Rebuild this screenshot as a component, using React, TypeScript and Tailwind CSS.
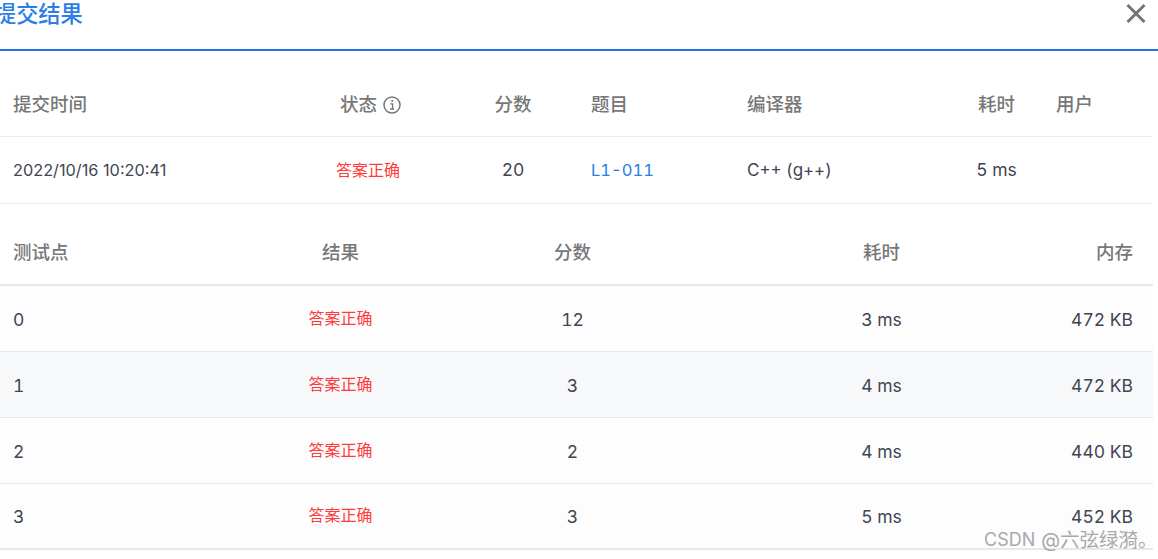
import React from "react";

const FONT = "font-['Inter','Noto_Sans_CJK_SC',sans-serif]";

function Ok() {
  return <span className="text-[16px] text-[#ff3b3b]">答案正确</span>;
}

const summaryCols = "grid grid-cols-[288px_160px_130px_156px_216px_93px_110px] items-center";
const caseCols = "grid grid-cols-[232px_217px_247px_371px_86px] items-center";

const cases = [
  ["0", "12", "3 ms", "472 KB", "bg-[#fdfdfd]", "border-b"],
  ["1", "3", "4 ms", "472 KB", "bg-[#f7f8fa]", "border-b"],
  ["2", "2", "4 ms", "440 KB", "bg-[#fdfdfd]", "border-b"],
  ["3", "3", "5 ms", "452 KB", "bg-[#fdfdfd]", "border-b-2"],
];

export default function App() {
  return (
    <div className={`${FONT} relative h-[559px] w-[1158px] overflow-hidden bg-white text-[#3f4652] tabular-nums`}>
      <header className="flex h-[51px] items-start justify-between border-b-2 border-[#2176e6]">
        <h1 className="-ml-[6px] mt-[1px] text-[22.2px] leading-[26px] font-medium text-[#2b7de9]">提交结果</h1>
        <svg className="mr-[12px] mt-[3px]" width="20" height="20" viewBox="0 0 20 20" fill="none" stroke="#757575" strokeWidth="3">
          <path d="M1.5 2 L18.5 19 M18.5 2 L1.5 19" />
        </svg>
      </header>

      <div className="w-[1153px]">
        <div className={`${summaryCols} mt-[21px] h-[65px] border-b border-[#eeeeee] pt-[2px] text-[18.5px] font-medium text-[#777777]`}>
          <span className="pl-[13px]">提交时间</span>
          <span className="flex items-center justify-center gap-[6px] pl-[5px]">
            状态
            <svg width="18" height="18" viewBox="0 0 18 18" fill="none" stroke="#777777">
              <circle cx="9" cy="9" r="8" strokeWidth="1.5" />
              <path d="M7.2 7.9 H9.6 V12.8 M7 13 H11.2" strokeWidth="1.4" />
              <path d="M8.4 4.9 H10.1" strokeWidth="1.9" />
            </svg>
          </span>
          <span className="text-center">分数</span>
          <span className="pl-[13px]">题目</span>
          <span className="pl-[13px]">编译器</span>
          <span className="text-center">耗时</span>
          <span className="pl-[13px]">用户</span>
        </div>
        <div className={`${summaryCols} h-[67px] border-b border-[#eeeeee] pt-[1px] text-[17.5px]`}>
          <span className="pl-[13px] text-[16.3px] [font-variant-numeric:normal]">2022/10/16 10:20:41</span>
          <span className="text-center"><Ok /></span>
          <span className="text-center">20</span>
          <span className="pl-[13px] text-[16.5px] text-[#2b7de9]">L1-011</span>
          <span className="pl-[13px] text-[17px]">C++ (g++)</span>
          <span className="text-center">5 ms</span>
          <span />
        </div>

        <div className={`${caseCols} mt-[16px] h-[66px] border-b-2 border-[#e8e8e8] pt-[2px] text-[18.5px] font-medium text-[#777777]`}>
          <span className="pl-[13px]">测试点</span>
          <span className="text-center">结果</span>
          <span className="text-center">分数</span>
          <span className="text-center">耗时</span>
          <span className="pr-[20px] text-right">内存</span>
        </div>
        {cases.map(([id, score, time, mem, bg, border]) => (
          <div key={id} className={`${caseCols} ${bg} ${border} h-[66px] border-[#e8e8e8] pt-[3px] text-[17.5px]`}>
            <span className="pl-[13px]">{id}</span>
            <span className="-mt-[4px] text-center"><Ok /></span>
            <span className="text-center">{score}</span>
            <span className="text-center">{time}</span>
            <span className="whitespace-nowrap pr-[20px] text-right">{mem}</span>
          </div>
        ))}
      </div>

      <div className="absolute left-[984px] top-[528px] flex items-center gap-[6px] whitespace-nowrap text-[18px] leading-[24px] text-[#a9a9a9]">
        <span>CSDN</span>
        <span className="text-[19.5px]">@六弦绿漪。</span>
      </div>
    </div>
  );
}
